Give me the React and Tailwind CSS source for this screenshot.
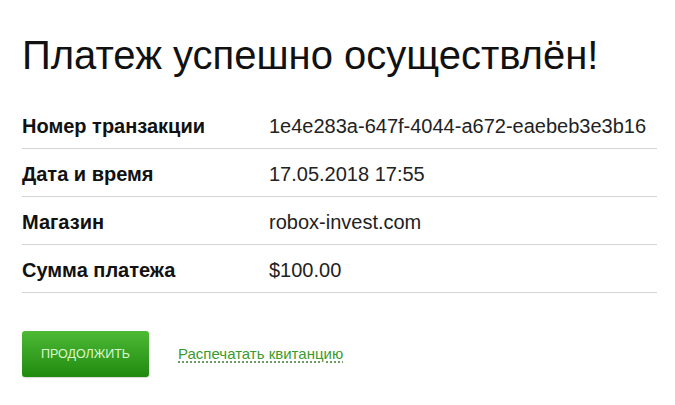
import React from 'react';

const rows = [
  { label: 'Номер транзакции', value: '1e4e283a-647f-4044-a672-eaebeb3e3b16' },
  { label: 'Дата и время', value: '17.05.2018 17:55' },
  { label: 'Магазин', value: 'robox-invest.com' },
  { label: 'Сумма платежа', value: '$100.00' },
];

export default function App() {
  return (
    <div className="min-h-screen bg-white px-[22px] pt-[31px] font-['Liberation_Sans',Arial,sans-serif] text-[#111]">
      <h1 className="text-[40px] leading-[48px] font-normal">Платеж успешно осуществлён!</h1>

      {/* Details */}
      <div className="mt-[22px] w-[635px]">
        {rows.map(row => (
          <div key={row.label} className="flex h-[48px] items-center border-b border-[#d4d4d4] pt-[2px]">
            <div className="w-[247px] text-[20px] font-bold">{row.label}</div>
            <div className="text-[20px] text-[#222]">{row.value}</div>
          </div>
        ))}
      </div>

      {/* Actions */}
      <div className="mt-[38px] flex items-center">
        <button className="flex h-[46px] w-[127px] items-center justify-center rounded-[3px] bg-gradient-to-b from-[#4dba35] to-[#1e8a0c] text-[12.5px] text-[#dcf7cc] shadow-[0_1px_1px_rgba(0,0,0,0.15)]">
          ПРОДОЛЖИТЬ
        </button>
        <a className="ml-[29px] text-[15px] text-[#3b9a2c] underline decoration-dotted decoration-[#3b7a30] underline-offset-[3px]">
          Распечатать квитанцию
        </a>
      </div>
    </div>
  );
}
